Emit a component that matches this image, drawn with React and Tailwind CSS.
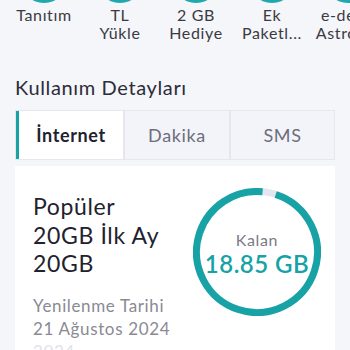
import React from "react";

const items = [
  ["Tanıtım", ""],
  ["TL", "Yükle"],
  ["2 GB", "Hediye"],
  ["Ek", "Paketl..."],
  ["e-dergi", "Astroloji"],
];

export default function App() {
  return (
    <div
      className="w-[350px] h-[350px] overflow-hidden bg-[#f5f6f9] text-[#2c2c3a] tracking-[0.04em]"
      style={{ fontFamily: "Lato, 'Noto Sans', sans-serif" }}
    >
      {/* top quick actions */}
      <div className="flex mt-[-45px] ml-[6px]">
        {items.map(([a, b], i) => (
          <div key={i} className="w-[76px] shrink-0 flex flex-col items-center">
            <div className="w-[48px] h-[48px] rounded-full bg-[#1fa8ad]" />
            <div className="mt-[3px] text-[16px] leading-[18px] text-[#3a3a44] text-center whitespace-nowrap">
              <div>{a}</div>
              {b && <div>{b}</div>}
            </div>
          </div>
        ))}
      </div>

      {/* section title */}
      <div className="mt-[33px] px-[15px] text-[20px] leading-[24px] text-[#2c2c3a]">
        Kullanım Detayları
      </div>

      {/* tabs */}
      <div className="mt-[11px] mx-[15px] flex h-[50px] w-[320px] border border-[#e6e7ee]">
        <div className="w-[107px] bg-white border-l-[3px] border-[#17a2a6] flex items-center justify-center text-[18px] font-bold text-[#22222e]">
          İnternet
        </div>
        <div className="w-[106px] bg-[#f3f4f9] border-l-[2px] border-[#e6e7ee] flex items-center justify-center text-[18px] text-[#6e6e7c]">
          Dakika
        </div>
        <div className="flex-1 bg-[#f3f4f9] border-l-[2px] border-[#e6e7ee] flex items-center justify-center text-[18px] text-[#6e6e7c]">
          SMS
        </div>
      </div>

      {/* card */}
      <div className="mt-[6px] mx-[15px] w-[320px] h-[200px] bg-white flex pl-[18px] pt-[26px]">
        <div className="w-[160px] shrink-0 flex flex-col">
          <div className="text-[23px] leading-[28.5px] text-[#22222e]">
            <div>Popüler</div>
            <div className="whitespace-nowrap">20GB İlk Ay</div>
            <div>20GB</div>
          </div>
          <div className="mt-[16px] text-[17px] leading-[23px] text-[#8a8a94] whitespace-nowrap">
            <div>Yenilenme Tarihi</div>
            <div>21 Ağustos 2024</div>
            <div className="text-[#e2e2e8]">2024</div>
          </div>
        </div>
        <div className="relative mt-[-4px] w-[128px] h-[128px] shrink-0">
          <svg width="128" height="128" viewBox="0 0 128 128" className="absolute inset-0">
            <circle cx="64" cy="64" r="60.5" fill="none" stroke="#e4e5ef" strokeWidth="7" />
            <circle
              cx="64"
              cy="64"
              r="60.5"
              fill="none"
              stroke="#17a2a6"
              strokeWidth="7"
              strokeDasharray={`${2 * Math.PI * 60.5 * 0.963} ${2 * Math.PI * 60.5}`}
              transform="rotate(-72 64 64)"
            />
          </svg>
          <div className="absolute inset-0 flex flex-col items-center justify-center pt-[2px]">
            <div className="text-[16px] leading-[20px] text-[#7a7a86]">Kalan</div>
            <div className="text-[24px] leading-[27px] font-semibold text-[#17a2a6] whitespace-nowrap tracking-[0.02em]">
              18.85 GB
            </div>
          </div>
        </div>
      </div>
    </div>
  );
}
